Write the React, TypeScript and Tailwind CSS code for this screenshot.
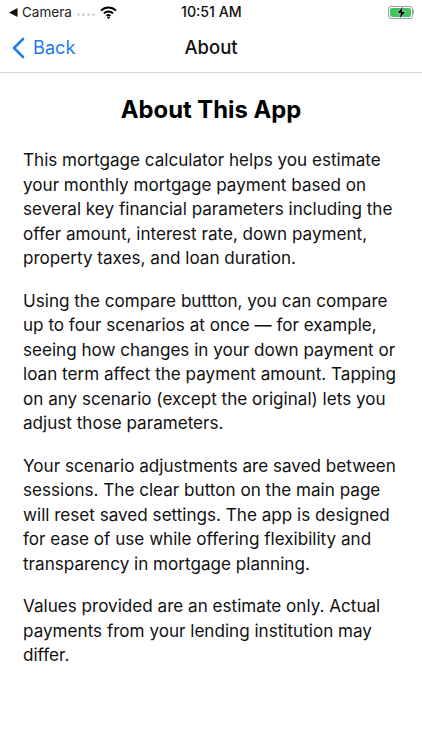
import React from "react";

const paragraphs = [
  ["This mortgage calculator helps you estimate", "your monthly mortgage payment based on", "several key financial parameters including the", "offer amount, interest rate, down payment,", "property taxes, and loan duration."],
  ["Using the compare buttton, you can compare", "up to four scenarios at once — for example,", "seeing how changes in your down payment or", "loan term affect the payment amount. Tapping", "on any scenario (except the original) lets you", "adjust those parameters."],
  ["Your scenario adjustments are saved between", "sessions. The clear button on the main page", "will reset saved settings. The app is designed", "for ease of use while offering flexibility and", "transparency in mortgage planning."],
  ["Values provided are an estimate only. Actual", "payments from your lending institution may", "differ."],
];

const App = () => {
  return (
    <div className="w-[422px] h-[750px] bg-white text-black overflow-hidden font-['Inter',sans-serif]">
      <div className="h-6 flex items-center justify-between pl-[9px] pr-2 relative text-[13.5px]">
        <div className="flex items-center">
          <svg width="9" height="9" viewBox="0 0 9 9" fill="#111" className="mr-[4px]">
            <path d="M0 4.5 8.5 0v9z" />
          </svg>
          <span className="text-[#222]">Camera</span>
          <div className="flex gap-[2px] ml-[5px] mr-[5px] mt-[4px]">
            <span className="w-[3px] h-[3px] rounded-full bg-gray-300" />
            <span className="w-[3px] h-[3px] rounded-full bg-gray-300" />
            <span className="w-[3px] h-[3px] rounded-full bg-gray-300" />
            <span className="w-[3px] h-[3px] rounded-full bg-gray-300" />
          </div>
          <svg width="17" height="13" viewBox="0 0 17 13" fill="none" stroke="#000" strokeWidth="2">
            <path d="M1 4.6c4.2-4.2 10.8-4.2 15 0" />
            <path d="M3.9 7.4c2.6-2.5 6.6-2.5 9.2 0" />
            <path d="M6.6 9.9c1.1-1 2.7-1 3.8 0" />
            <path d="M8.5 13 6.9 11.2c.9-.7 2.3-.7 3.2 0z" fill="#000" stroke="none" />
          </svg>
        </div>
        <span className="absolute left-[181px] text-[14.2px] font-medium text-[#111]">10:51 AM</span>
        <div className="flex items-center">
          <div className="w-[25px] h-[13px] rounded-[3px] border border-gray-400 p-[1px]">
            <div className="relative w-full h-full rounded-[2px] bg-[#3ec65f]">
              <svg width="11" height="13" viewBox="0 0 11 13" fill="#000" stroke="#fff" strokeWidth="0.5" className="absolute left-[6px] top-[-2px]">
                <path d="M7 0 1 7.3h3.4L3.6 13l6.2-7.6H6.2z" />
              </svg>
            </div>
          </div>
          <div className="w-[1px] h-1 bg-gray-400" />
        </div>
      </div>
      <div className="h-[49px] flex items-center relative border-b border-[#d4d4d6]">
        <div className="flex items-center gap-2 pl-3 text-[#1f7bea] text-[18.2px]">
          <svg width="13" height="22" viewBox="0 0 13 22" fill="none" stroke="#1f7bea" strokeWidth="2.6" strokeLinecap="round" strokeLinejoin="round">
            <path d="M11 2 2 11l9 9" />
          </svg>
          <span>Back</span>
        </div>
        <span className="absolute left-0 right-0 text-center text-[18.5px] font-medium text-[#111]">About</span>
      </div>
      <h1 className="text-center text-[23.8px] leading-8 font-bold mt-[21px] mb-[22px]">About This App</h1>
      <div className="pl-[23px] flex flex-col gap-[18px] text-[17.1px] leading-[24.5px] text-[#111]">
        {paragraphs.map((lines, i) => (
          <p key={i}>
            {lines.map((line) => (
              <span key={line} className="block whitespace-nowrap">{line}</span>
            ))}
          </p>
        ))}
      </div>
    </div>
  );
};

export default App;
